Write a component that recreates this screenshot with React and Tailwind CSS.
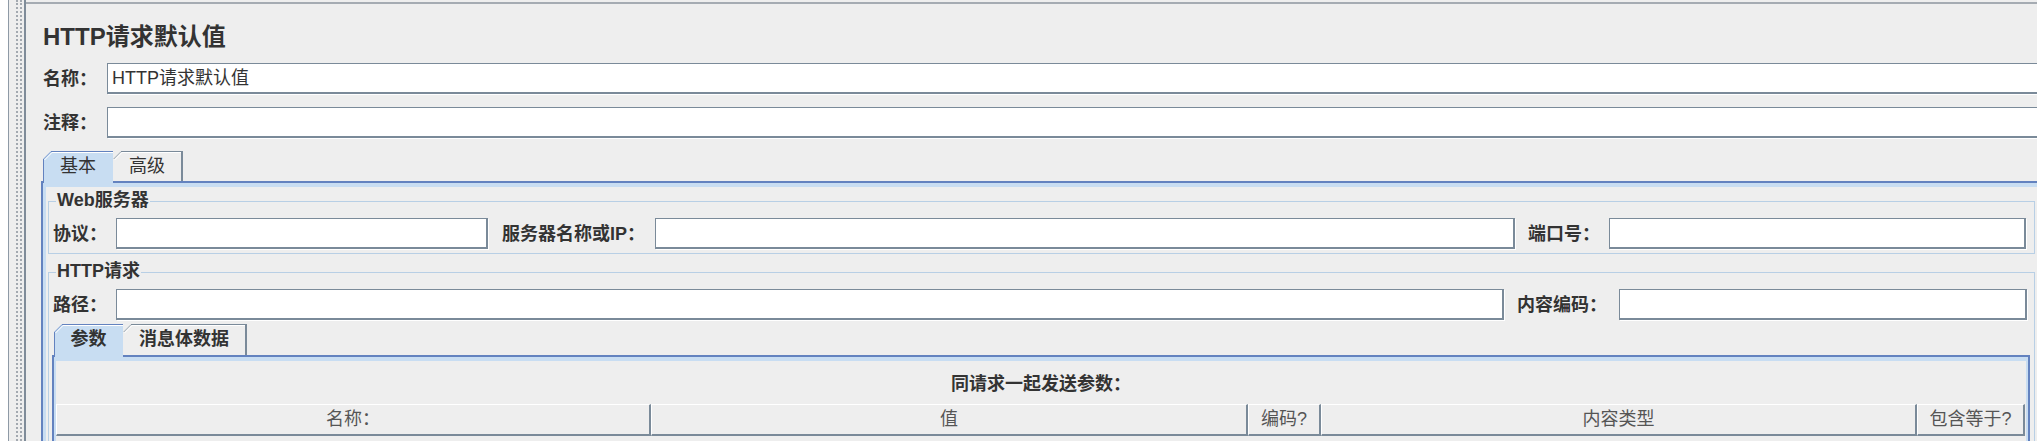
const font = "font-['Liberation_Sans','Noto_Sans_CJK_SC',sans-serif]";

const Field = ({ className = "", children }) => (
  <div
    className={`h-[31px] shrink-0 bg-white border-t border-l border-b-2 border-r-2 border-[#7a8a99] shadow-[1px_1px_0_#ffffff] flex items-center ${className}`}
  >
    {children}
  </div>
);

const Label = ({ className = "", children }) => (
  <div className={`shrink-0 text-[18px] font-bold text-[#333333] leading-[20px] ${className}`}>
    {children}
  </div>
);

const Tab = ({ selected, last, className = "", textClass = "", children }) => (
  <div
    className={`relative flex items-center justify-center [clip-path:polygon(8px_0,100%_0,100%_100%,0_100%,0_8px)] ${
      selected ? "z-10 bg-[#c8ddf2]" : "bg-[#eeeeee]"
    } ${last ? "border-r-2 border-[#7a8a99]" : ""} ${className}`}
  >
    <svg className="absolute inset-0 w-full h-full pointer-events-none" fill="none">
      <line x1="1.5" y1="9" x2="9" y2="1.5" stroke="#ffffff" />
      <line x1="9" y1="1.5" x2="100%" y2="1.5" stroke="#ffffff" />
      <line x1="0.5" y1="8" x2="8" y2="0.5" stroke={selected ? "#6382bf" : "#7a8a99"} />
      <line x1="8" y1="0.5" x2="100%" y2="0.5" stroke={selected ? "#6382bf" : "#7a8a99"} />
      {selected && <line x1="0.5" y1="8" x2="0.5" y2="100%" stroke="#6382bf" />}
    </svg>
    <span className={`relative text-[18px] text-[#333333] ${textClass}`}>{children}</span>
  </div>
);

const HeaderCell = ({ className = "", children }) => (
  <div
    className={`h-full shrink-0 flex items-center justify-center border-t border-l border-white border-b-2 border-r-2 border-b-[#7a8a99] border-r-[#7a8a99] text-[18px] text-[#555555] ${className}`}
  >
    {children}
  </div>
);

const GroupTitle = ({ children }) => (
  <div className="absolute -top-[12px] left-[7px] px-[1px] bg-[#eeeeee] text-[18px] font-bold leading-[20px] text-[#333333]">
    {children}
  </div>
);

export default function App() {
  return (
    <div className={`w-[2037px] h-[441px] overflow-hidden bg-[#eeeeee] flex ${font}`}>
      {/* tree edge */}
      <div className="w-[9px] shrink-0 bg-white border-r border-[#8e9aa6]" />

      {/* splitter */}
      <div className="w-[17px] shrink-0 border-r-2 border-[#7f8c99]">
        <div className="h-full ml-[7px] w-[6px] border-x-2 border-dotted border-[#a3a9b0]" />
      </div>

      {/* main panel */}
      <div className="w-[2030px] shrink-0 mt-[2px] border-t-2 border-[#a5abb2]">
        <div className="h-[59px] pt-[21px] pl-[17px] text-[24px] font-bold leading-[24px] text-[#333333]">
          HTTP请求默认值
        </div>

        <div className="flex items-center h-[31px] pl-[17px]">
          <Label className="w-[64px]">名称：</Label>
          <Field className="w-[1990px] pl-[4px]">
            <span className="text-[18px] text-[#333333]">HTTP请求默认值</span>
          </Field>
        </div>

        <div className="flex items-center h-[31px] pl-[17px] mt-[13px]">
          <Label className="w-[64px]">注释：</Label>
          <Field className="w-[1990px]" />
        </div>

        {/* outer tabs */}
        <div className="mt-[13px] ml-[15px]">
          <div className="flex items-end h-[30px] pl-[2px]">
            <Tab selected className="w-[70px] h-[32px] -mb-[2px] pb-[2px]">
              基本
            </Tab>
            <Tab last className="w-[70px] h-[30px]">
              高级
            </Tab>
          </div>

          <div className="border-t-2 border-l-2 border-[#6382bf] h-[300px]">
            <div className="border-t-4 border-l-[3px] border-[#c8ddf2] h-full pt-[14px] pl-[2px]">
              {/* Web server group */}
              <div className="relative w-[1987px] border border-[#b8cfe5] pt-[16px] pb-[4px] pl-[4px]">
                <GroupTitle>Web服务器</GroupTitle>
                <div className="flex items-center h-[31px]">
                  <Label className="w-[63px]">协议：</Label>
                  <Field className="w-[372px]" />
                  <Label className="ml-[14px] w-[153px]">服务器名称或IP：</Label>
                  <Field className="w-[860px]" />
                  <Label className="ml-[13px] w-[81px]">端口号：</Label>
                  <Field className="w-[417px]" />
                </div>
              </div>

              {/* HTTP request group */}
              <div className="relative w-[1987px] mt-[18px] border border-[#b8cfe5] pt-[16px] h-[200px]">
                <GroupTitle>HTTP请求</GroupTitle>
                <div className="flex items-center h-[31px] pl-[4px]">
                  <Label className="w-[63px]">路径：</Label>
                  <Field className="w-[1388px]" />
                  <Label className="ml-[13px] w-[102px]">内容编码：</Label>
                  <Field className="w-[408px]" />
                </div>

                <div className="mt-[4px] ml-[3px] w-[1978px]">
                  <div className="flex items-end h-[31px] pl-[2px]">
                    <Tab selected className="w-[69px] h-[33px] -mb-[2px] pb-[2px]" textClass="font-bold">
                      参数
                    </Tab>
                    <Tab last className="w-[124px] h-[31px]" textClass="font-bold">
                      消息体数据
                    </Tab>
                  </div>

                  <div className="border-t-2 border-x-2 border-[#6382bf] h-[120px]">
                    <div className="border-t-4 border-x-2 border-[#c8ddf2] h-full">
                      <div className="h-[43px] pt-[4px] flex items-center justify-center text-[18px] font-bold text-[#333333]">
                        同请求一起发送参数：
                      </div>
                      <div className="flex h-[32px]">
                        <HeaderCell className="w-[595px]">名称：</HeaderCell>
                        <HeaderCell className="w-[597px]">值</HeaderCell>
                        <HeaderCell className="w-[73px]">编码?</HeaderCell>
                        <HeaderCell className="w-[596px]">内容类型</HeaderCell>
                        <HeaderCell className="w-[108px]">包含等于?</HeaderCell>
                      </div>
                    </div>
                  </div>
                </div>
              </div>
            </div>
          </div>
        </div>
      </div>
    </div>
  );
}
